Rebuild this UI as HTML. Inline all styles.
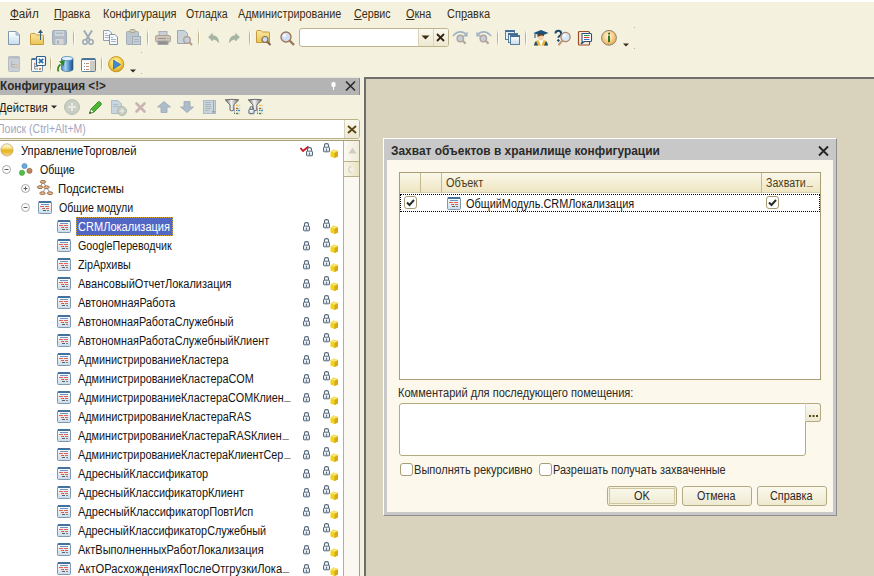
<!DOCTYPE html><html><head><meta charset="utf-8"><style>
*{margin:0;padding:0;box-sizing:border-box}
html,body{width:874px;height:576px;overflow:hidden;background:#F4F1DF}
body{position:relative;font-family:"Liberation Sans",sans-serif;font-size:12px;color:#000}
.ab{position:absolute}
.t{position:absolute;white-space:nowrap;line-height:14px;height:14px;font-size:12px;transform-origin:0 0}
.b{font-weight:bold}
.u{text-decoration:underline}
.el{display:inline-block;width:7px;height:1px;background:#8A8A8A;vertical-align:0px;margin-left:1px}
svg{position:absolute;overflow:visible}
</style></head><body>
<svg width="0" height="0" style="position:absolute;left:0;top:0">
<defs>
<linearGradient id="gDoc" x1="0" y1="0" x2="0" y2="1"><stop offset="0" stop-color="#fff"/><stop offset="1" stop-color="#C9DCEB"/></linearGradient>
<linearGradient id="gFold" x1="0" y1="0" x2="0" y2="1"><stop offset="0" stop-color="#F9E7A0"/><stop offset="1" stop-color="#EBC452"/></linearGradient>
<linearGradient id="gBtn" x1="0" y1="0" x2="0" y2="1"><stop offset="0" stop-color="#FCFBF4"/><stop offset="1" stop-color="#ECE6CC"/></linearGradient>
<linearGradient id="gRoot" x1="0" y1="0" x2="0" y2="1"><stop offset="0" stop-color="#FFF8DC"/><stop offset="0.3" stop-color="#FAEAA0"/><stop offset="0.55" stop-color="#E6B61E"/><stop offset="0.8" stop-color="#EEC24A"/><stop offset="1" stop-color="#FAE8B8"/></linearGradient><radialGradient id="gGold" cx="0.45" cy="0.35" r="0.7"><stop offset="0" stop-color="#FFF6B0"/><stop offset="0.6" stop-color="#F2CD45"/><stop offset="1" stop-color="#C9961C"/></radialGradient>
<radialGradient id="gInfo" cx="0.45" cy="0.4" r="0.65"><stop offset="0" stop-color="#FFF8EA"/><stop offset="0.55" stop-color="#F8CC88"/><stop offset="1" stop-color="#E8A040"/></radialGradient>
<linearGradient id="gCyl" x1="0" y1="0" x2="1" y2="0"><stop offset="0" stop-color="#4A86BC"/><stop offset="0.35" stop-color="#A8D2F2"/><stop offset="0.7" stop-color="#4A88C0"/><stop offset="1" stop-color="#1E4E80"/></linearGradient>
<linearGradient id="gFun" x1="0" y1="0" x2="1" y2="0"><stop offset="0" stop-color="#6A6A6A"/><stop offset="0.45" stop-color="#F4F4F4"/><stop offset="1" stop-color="#707070"/></linearGradient>
<linearGradient id="gLock" x1="0" y1="0" x2="0" y2="1"><stop offset="0" stop-color="#FFFFFF"/><stop offset="1" stop-color="#C4D4E2"/></linearGradient>
<g id="mod">
 <rect x="0.5" y="0.5" width="13" height="12" rx="1" fill="url(#gDoc)" stroke="#8098AE"/>
 <rect x="1" y="0" width="12" height="2" fill="#44729A"/>
 <rect x="3" y="3" width="8" height="1" fill="#6A96C8"/>
 <rect x="2" y="5" width="4" height="1" fill="#E8604C"/><rect x="7" y="5" width="4" height="1" fill="#E8604C"/>
 <rect x="4" y="7" width="2" height="1" fill="#E8604C"/><rect x="6" y="7" width="1" height="1" fill="#707070"/><rect x="8" y="7" width="3" height="1" fill="#E8604C"/>
 <rect x="5" y="9" width="3" height="1" fill="#606060"/><rect x="9" y="9" width="2" height="1" fill="#808080"/>
</g>
<g id="lock">
 <path d="M1.5,4.5 V2.2 Q1.5,0.6 3.2,0.6 H3.8 Q5.5,0.6 5.5,2.2 V4.5" fill="none" stroke="#56687A" stroke-width="1.15"/>
 <rect x="0.5" y="4.2" width="6" height="4.6" rx="0.8" fill="url(#gLock)" stroke="#46586A" stroke-width="0.9"/>
 <rect x="3" y="5.6" width="1" height="2.2" fill="#5E6E7E"/>
</g>
<g id="cube">
 <path d="M0.5,2.5 L3.5,0.5 L8,2 L8,7.5 L4.5,9 L0.5,7.5 Z" fill="#F2D21C"/>
 <path d="M4.5,3.8 L8,2 L8,7.5 L4.5,9 Z" fill="#D8A818"/>
 <path d="M0.5,2.5 L3.5,0.5 L8,2 L4.5,3.8 Z" fill="#F8E470"/>
</g>
<g id="plusc"><circle cx="4.5" cy="4.5" r="4" fill="#fff" stroke="#A8A8A8"/><rect x="2.5" y="4" width="4" height="1" fill="#606060"/><rect x="4" y="2.5" width="1" height="4" fill="#606060"/></g>
<g id="minusc"><circle cx="4.5" cy="4.5" r="4" fill="#fff" stroke="#A8A8A8"/><rect x="2.5" y="4" width="4" height="1" fill="#606060"/></g>
<g id="chk"><rect x="0.5" y="0.5" width="12" height="12" rx="2.5" fill="#fff" stroke="#A59A72"/><path d="M3,6.5 L5.5,9 L10,4" fill="none" stroke="#2A2A2A" stroke-width="2"/></g>
<linearGradient id="gSep" x1="0" y1="0" x2="0" y2="1"><stop offset="0" stop-color="#C9BF98" stop-opacity="0"/><stop offset="0.3" stop-color="#BDB288"/><stop offset="0.7" stop-color="#BDB288"/><stop offset="1" stop-color="#C9BF98" stop-opacity="0"/></linearGradient><g id="sep"><rect x="0" y="0" width="1" height="18" fill="url(#gSep)"/><rect x="1" y="1" width="1" height="16" fill="#FFFFF8" opacity="0.8"/></g>
</defs></svg>
<div class="ab" style="left:0;top:0;width:874px;height:2px;background:#fff"></div>
<div class="t" style="left:10.30px;top:7px;color:#3A2E12;transform:scaleX(0.9724);"><span class="u">Ф</span>айл</div>
<div class="t" style="left:54.40px;top:7px;color:#3A2E12;transform:scaleX(0.8927);"><span class="u">П</span>равка</div>
<div class="t" style="left:103.19px;top:7px;color:#3A2E12;transform:scaleX(0.9127);">Конфигурация</div>
<div class="t" style="left:185.80px;top:7px;color:#3A2E12;transform:scaleX(0.8792);">Отладка</div>
<div class="t" style="left:238.40px;top:7px;color:#3A2E12;transform:scaleX(0.9018);">Администрирование</div>
<div class="t" style="left:353.80px;top:7px;color:#3A2E12;transform:scaleX(0.8927);"><span class="u">С</span>ервис</div>
<div class="t" style="left:405.70px;top:7px;color:#3A2E12;transform:scaleX(0.9036);"><span class="u">О</span>кна</div>
<div class="t" style="left:446.50px;top:7px;color:#3A2E12;transform:scaleX(0.9149);">Сп<span class="u">р</span>авка</div>
<svg style="left:73px;top:29px" width="2" height="18" viewBox="0 0 2 18" ><use href="#sep"/></svg><svg style="left:147px;top:29px" width="2" height="18" viewBox="0 0 2 18" ><use href="#sep"/></svg><svg style="left:198px;top:29px" width="2" height="18" viewBox="0 0 2 18" ><use href="#sep"/></svg><svg style="left:249px;top:29px" width="2" height="18" viewBox="0 0 2 18" ><use href="#sep"/></svg><svg style="left:497px;top:29px" width="2" height="18" viewBox="0 0 2 18" ><use href="#sep"/></svg><svg style="left:525px;top:29px" width="2" height="18" viewBox="0 0 2 18" ><use href="#sep"/></svg><svg style="left:50px;top:55px" width="2" height="18" viewBox="0 0 2 18" ><use href="#sep"/></svg><svg style="left:101px;top:55px" width="2" height="18" viewBox="0 0 2 18" ><use href="#sep"/></svg><svg style="left:8px;top:31px" width="12" height="14" viewBox="0 0 12 14" ><path d="M0.5,0.5 H8 L11.5,4 V13.5 H0.5 Z" fill="url(#gDoc)" stroke="#7E9AB0"/><path d="M8,0.5 L11.5,4 H8 Z" fill="#C4D6E4" stroke="#8EA8BC" stroke-width="0.8"/></svg><svg style="left:30px;top:29px" width="15" height="16" viewBox="0 0 15 16" ><path d="M0.5,15.5 V5.5 Q0.5,4.5 1.5,4.5 H5 L6.5,6 H12.5 Q13.5,6 13.5,7 V15.5 Z" fill="url(#gFold)" stroke="#C59A3A"/><path d="M10.5,11 V2" stroke="#2F5C80" stroke-width="1"/><path d="M8,4 L10.5,0.5 L13,4 Z" fill="#2F5C80"/></svg><svg style="left:52px;top:30px" width="15" height="15" viewBox="0 0 15 15" ><rect x="0.5" y="0.5" width="14" height="14" rx="1" fill="#B2BCC4" stroke="#A0ACB6"/><rect x="3" y="1" width="9" height="5" fill="#CCD6DC"/><rect x="4" y="2.5" width="7" height="1.5" fill="#AEBAC2"/><rect x="3.5" y="9" width="8" height="5.5" fill="#D6D6D4"/><rect x="5" y="10.5" width="2" height="3" fill="#A8B0B6"/></svg><svg style="left:82px;top:30px" width="12" height="15" viewBox="0 0 12 15" ><path d="M2,0.5 L8,10 M10,0.5 L4,10" stroke="#9CAAB6" stroke-width="2" fill="none"/><circle cx="3" cy="12" r="2.2" fill="none" stroke="#9CAAB6" stroke-width="1.6"/><circle cx="9" cy="12" r="2.2" fill="none" stroke="#9CAAB6" stroke-width="1.6"/></svg><svg style="left:103px;top:30px" width="16" height="16" viewBox="0 0 16 16" ><path d="M0.5,0.5 H6 L8.5,3 V10.5 H0.5 Z" fill="#F6F9FC" stroke="#8AA0B4"/><rect x="2" y="3" width="2" height="1" fill="#A8B8C8"/><rect x="2" y="5" width="4" height="1" fill="#A8B8C8"/><rect x="2" y="7" width="4" height="1" fill="#A8B8C8"/><path d="M6.5,4.5 H12 L14.5,7 V14.5 H6.5 Z" fill="#F6F9FC" stroke="#7E96AC"/><rect x="8" y="7" width="2" height="1" fill="#A0B2C4"/><rect x="8" y="9" width="5" height="1" fill="#A0B2C4"/><rect x="8" y="11" width="5" height="1" fill="#A0B2C4"/></svg><svg style="left:126px;top:29px" width="15" height="16" viewBox="0 0 15 16" ><rect x="0.5" y="2.5" width="12" height="13" rx="1" fill="#BCC6CE" stroke="#A0ACB6"/><rect x="4" y="0.5" width="5" height="3" rx="1" fill="#D4CCB0" stroke="#B0A888"/><rect x="6.5" y="7.5" width="8" height="8" fill="#C4CED6" stroke="#A0ACB6"/><rect x="8" y="10" width="5" height="1" fill="#A8B4BE"/><rect x="8" y="12" width="5" height="1" fill="#A8B4BE"/></svg><svg style="left:155px;top:31px" width="16" height="14" viewBox="0 0 16 14" ><rect x="4" y="0.5" width="8" height="5" fill="#C8D0D6" stroke="#A8B0B6"/><rect x="0.5" y="4.5" width="15" height="6.5" rx="1.5" fill="#CEC4BA" stroke="#ACA39A"/><rect x="3" y="7" width="8" height="1" fill="#9A9088"/><rect x="12" y="7" width="1.5" height="1" fill="#8CC08C"/><rect x="3" y="10" width="10" height="3.5" fill="#8E8E8E" stroke="#A8A8A8"/></svg><svg style="left:177px;top:30px" width="16" height="16" viewBox="0 0 16 16" ><path d="M0.5,0.5 H7.5 L10.5,3.5 V13.5 H0.5 Z" fill="#C9D3DA" stroke="#9CAAB4"/><circle cx="10" cy="10" r="3.3" fill="#C4D0E0" stroke="#B49C8C" stroke-width="1.3"/><path d="M12.3,12.3 L15,15" stroke="#B49C8C" stroke-width="2"/></svg><svg style="left:208px;top:33px" width="11" height="10" viewBox="0 0 11 10" ><path d="M0.5,4 L4.5,0.5 V2.8 Q10.5,2.5 10.5,9.5 Q8.5,6 4.5,6 V8 Z" fill="#A7B5A5" stroke="#9AA898" stroke-width="0.6"/></svg><svg style="left:229px;top:33px" width="11" height="10" viewBox="0 0 11 10" ><path d="M10.5,4 L6.5,0.5 V2.8 Q0.5,2.5 0.5,9.5 Q2.5,6 6.5,6 V8 Z" fill="#A7B5A5" stroke="#9AA898" stroke-width="0.6"/></svg><svg style="left:256px;top:30px" width="16" height="16" viewBox="0 0 16 16" ><path d="M0.5,12.5 V1.5 Q0.5,0.5 1.5,0.5 H5 L6.5,2 H12.5 Q13.5,2 13.5,3 V12.5 Z" fill="url(#gFold)" stroke="#C59A3A"/><circle cx="9" cy="9.5" r="3" fill="#C8DCF2" stroke="#8A6A50" stroke-width="1.2"/><path d="M11,11.5 L14.5,15" stroke="#8A5E40" stroke-width="2"/></svg><svg style="left:280px;top:31px" width="16" height="16" viewBox="0 0 16 16" ><circle cx="6" cy="6" r="5" fill="#CFE0F6" stroke="#A07656" stroke-width="1.4"/><circle cx="4.5" cy="4.5" r="1.8" fill="#F0F6FF"/><path d="M9.5,9.5 L14,14" stroke="#A07656" stroke-width="2.4"/></svg><div class="ab" style="left:299px;top:28px;width:150px;height:19px;background:#fff;border:1px solid #BDB38C;border-radius:3px"></div><div class="ab" style="left:418px;top:29px;width:15px;height:17px;background:linear-gradient(#FBF9F0,#EEE8D0);border-left:1px solid #DCD4B8"></div><div class="ab" style="left:433px;top:29px;width:15px;height:17px;background:linear-gradient(#FBF9F0,#EEE8D0);border-left:1px solid #DCD4B8;border-radius:0 2px 2px 0"></div><svg style="left:421px;top:35px" width="9" height="5" viewBox="0 0 9 5" ><path d="M0.5,0.5 H8.5 L4.5,4.5 Z" fill="#3A2E12"/></svg><svg style="left:436px;top:33px" width="9" height="9" viewBox="0 0 9 9" ><path d="M1,1 L8,8 M8,1 L1,8" stroke="#2E2410" stroke-width="1.8"/></svg><svg style="left:452px;top:30px" width="17" height="16" viewBox="0 0 17 16" ><g transform="translate(0,-2)"><path d="M1,8 Q7,1 14,6" fill="none" stroke="#A0B4C4" stroke-width="1.8"/><path d="M10.8,8.5 H15.6 V3.6 Z" fill="#A0B4C4"/></g><circle cx="8.3" cy="8.5" r="3.2" fill="#C2D0DC" stroke="#B4A49C" stroke-width="1.4"/><path d="M10.6,10.8 L13.6,13.6" stroke="#B4A49C" stroke-width="2.2"/></svg><svg style="left:475px;top:30px" width="17" height="16" viewBox="0 0 17 16" ><g transform="translate(0,-2)"><path d="M16,8 Q10,1 3,6" fill="none" stroke="#A0B4C4" stroke-width="1.8"/><path d="M6.2,8.5 H1.4 V3.6 Z" fill="#A0B4C4"/></g><circle cx="8.3" cy="8.5" r="3.2" fill="#C2D0DC" stroke="#B4A49C" stroke-width="1.4"/><path d="M10.6,10.8 L13.6,13.6" stroke="#B4A49C" stroke-width="2.2"/></svg><svg style="left:505px;top:30px" width="15" height="15" viewBox="0 0 15 15" ><rect x="0.5" y="0.5" width="9" height="9" fill="#E4EEF6" stroke="#5A7E9E"/><rect x="0.5" y="0.5" width="9" height="1.5" fill="#3E6A92"/><rect x="3.5" y="3.5" width="9" height="9" fill="#E8F0F8" stroke="#5A7E9E"/><rect x="3.5" y="3.5" width="9" height="1.5" fill="#3E6A92"/><rect x="5.5" y="5.5" width="9" height="9" fill="url(#gDoc)" stroke="#5A7E9E"/><rect x="5.5" y="5.5" width="9" height="1.5" fill="#3E6A92"/></svg><svg style="left:533px;top:29px" width="16" height="17" viewBox="0 0 16 17" ><path d="M0.5,4 L8,1 L15.5,4 L8,7 Z" fill="#1E4F78"/><path d="M2,4.5 V9" stroke="#1E4F78" stroke-width="1"/><path d="M4.5,6 Q4.5,11 8,11.5 Q11,11 11,6 Z" fill="#F2D0AE"/><path d="M4.5,6 Q6,4 11,6 V7 Q8,5.5 4.5,8 Z" fill="#6A4020"/><path d="M1,16.5 Q2,11.5 5.5,11 L8,16.5 Z" fill="#E8B830"/><path d="M15,16.5 Q14,11.5 10.5,11 L8,16.5 Z" fill="#E8B830"/><path d="M5.5,11 L8,16.5 L10.5,11 Q8,12.5 5.5,11Z" fill="#fff"/><path d="M1,16.5 Q1.5,13 3,12 L5,16.5 Z" fill="#1E4F78"/><path d="M15,16.5 Q14.5,13 13,12 L11,16.5 Z" fill="#1E4F78"/></svg><svg style="left:554px;top:30px" width="17" height="16" viewBox="0 0 17 16" ><path d="M1.5,3.5 Q1.5,0.8 4.3,0.8 Q7.2,0.8 7.2,3.4 Q7.2,5 5.4,6 Q4.4,6.6 4.4,7.8" fill="none" stroke="#1F4A70" stroke-width="2"/><rect x="3.2" y="9.3" width="2.3" height="2.3" fill="#1F4A70" transform="rotate(45 4.35 10.45)"/><circle cx="11.5" cy="7" r="4.6" fill="#D8E8F8" stroke="#B08462" stroke-width="1.3"/><circle cx="10.3" cy="5.6" r="1.8" fill="#F4F8FF"/><path d="M8.3,10.6 L5,14.5" stroke="#C09A78" stroke-width="2.2" stroke-linecap="round"/></svg><svg style="left:577px;top:30px" width="15" height="16" viewBox="0 0 15 16" ><rect x="1.5" y="1.5" width="11" height="13.5" rx="1" fill="#FCE9DA" stroke="#9A4E2A" stroke-width="1.2"/><path d="M5,3.5 H13.5 Q14.5,3.5 14.5,4.5 V10.5 Q14.5,11.5 13.5,11.5 H7.5 L4,14 L5.5,11.5 Q5,11.5 5,10.5 Z" fill="#fff" stroke="#24507A" stroke-width="1.1"/><rect x="7" y="5" width="5.5" height="1" fill="#2E9A3A"/><rect x="7" y="7" width="5.5" height="1" fill="#E03A2C"/><rect x="7" y="9" width="5.5" height="1" fill="#3A6CC8"/></svg><svg style="left:601px;top:30px" width="17" height="17" viewBox="0 0 17 17" ><circle cx="8" cy="7.8" r="7.4" fill="url(#gInfo)" stroke="#8E8474" stroke-width="1"/><path d="M7,3.2 L9,2.2 V4.4 H7 Z" fill="#2F7A1E"/><rect x="7" y="5.6" width="2" height="6.6" fill="#2F7A1E"/></svg><svg style="left:623px;top:43px" width="6" height="4" viewBox="0 0 6 4" ><path d="M0,0.5 H6 L3,3.5 Z" fill="#3A2A10"/></svg><div class="ab" style="left:634px;top:27px;width:1px;height:1px;background:#BBB49A"></div><div class="ab" style="left:634px;top:48px;width:1px;height:1px;background:#BBB49A"></div><svg style="left:8px;top:56px" width="12" height="16" viewBox="0 0 12 16" ><rect x="0.5" y="0.5" width="11" height="15" rx="1" fill="#C9CFD5" stroke="#B6BEC6"/><rect x="0.5" y="0.5" width="11" height="2" fill="#B4BCC4"/><rect x="3" y="5" width="1.5" height="1.5" fill="#D8B8A0"/><path d="M3.7,6.5 V11 H7 M3.7,8.5 H7" stroke="#B8B0A8" fill="none"/><rect x="7.5" y="8" width="2" height="1.5" fill="#D8B8A0"/><rect x="7.5" y="10.5" width="2" height="1.5" fill="#D8B8A0"/></svg><svg style="left:31px;top:56px" width="15" height="16" viewBox="0 0 15 16" ><rect x="0.5" y="2.5" width="11" height="13" rx="1" fill="#F4F8FC" stroke="#6A8AA6"/><rect x="0.5" y="2.5" width="4" height="1.5" fill="#3E6A92"/><rect x="3" y="7" width="1.5" height="1.5" fill="#D88850"/><path d="M3.7,8.5 V13 H7 M3.7,10.5 H7" stroke="#8A8A8A" fill="none"/><rect x="8" y="12" width="2" height="2" fill="#D88850"/><rect x="5.5" y="0.5" width="9" height="9" rx="1" fill="#fff" stroke="#2E5E88" stroke-width="1.2"/><path d="M7.8,2.8 L12.2,7.2 M12.2,2.8 L7.8,7.2" stroke="#2E6AA0" stroke-width="1.8"/></svg><svg style="left:56px;top:56px" width="18" height="17" viewBox="0 0 18 17" ><path d="M5.5,2.5 V13.2 A5.75,2.3 0 0 0 17,13.2 V2.5 Z" fill="url(#gCyl)" stroke="#2A5A88" stroke-width="0.6"/><ellipse cx="11.25" cy="2.6" rx="5.75" ry="2.1" fill="#E2F2FC" stroke="#4A84B8" stroke-width="0.8"/><path d="M2.5,15.5 Q0.8,11.5 4.5,8.5" fill="none" stroke="#3A8A2A" stroke-width="1.7"/><path d="M3,5.2 L8.8,4.6 L7.6,10.2 Z" fill="#2E8A22"/></svg><svg style="left:81px;top:58px" width="15" height="14" viewBox="0 0 15 14" ><rect x="0.5" y="0.5" width="14" height="13" rx="1" fill="#fff" stroke="#5E7E9A"/><rect x="1" y="0.5" width="13" height="1.6" fill="#44709A"/><rect x="9" y="3" width="5" height="10" fill="#CDCCC4"/><rect x="3" y="5" width="1" height="1" fill="#7A90A8"/><rect x="5" y="5" width="3" height="1" fill="#C89070"/><rect x="3" y="8" width="1" height="1" fill="#7A90A8"/><rect x="5" y="8" width="3" height="1" fill="#C89070"/><rect x="3" y="11" width="1" height="1" fill="#7A90A8"/><rect x="5" y="11" width="3" height="1" fill="#C89070"/></svg><svg style="left:108px;top:56px" width="17" height="17" viewBox="0 0 17 17" ><circle cx="8.2" cy="8.2" r="7.6" fill="url(#gGold)" stroke="#C8961E"/><path d="M5.5,4 L12.5,8.5 L5.5,13 Z" fill="#3C8AD8" stroke="#2A5A9A" stroke-width="0.6"/></svg><svg style="left:130px;top:69px" width="6" height="4" viewBox="0 0 6 4" ><path d="M0,0.5 H6 L3,3.5 Z" fill="#2A2A2A"/></svg><div class="ab" style="left:141px;top:52px;width:1px;height:1px;background:#BBB49A"></div><div class="ab" style="left:141px;top:73px;width:1px;height:1px;background:#BBB49A"></div>
<div class="ab" style="left:0;top:77px;width:874px;height:2px;background:#6E6E6E"></div>
<div class="ab" style="left:364px;top:77px;width:510px;height:499px;background:#D9D3BD;border-left:2px solid #6E6E6E;border-top:2px solid #6E6E6E"></div>
<div class="ab" style="left:0;top:77px;width:364px;height:499px;background:#F4F1DF"></div>
<div class="ab" style="left:0;top:77px;width:360px;height:1px;background:#E8E6DA"></div>
<div class="ab" style="left:0;top:78px;width:360px;height:17px;background:#B4B4B4;border-right:1px solid #8A8A8A"></div>
<div class="t b" style="left:-0.50px;top:79px;color:#2A2A2A;transform:scaleX(0.9769);">Конфигурация &lt;!&gt;</div>
<svg style="left:331px;top:82px" width="5" height="8" viewBox="0 0 5 8" ><rect x="0.5" y="0" width="4" height="5" rx="1.5" fill="#fff"/><rect x="2" y="5" width="1" height="3" fill="#fff"/></svg>
<svg style="left:345px;top:81px" width="11" height="10" viewBox="0 0 11 10" ><path d="M1,0.5 L10,9.5 M10,0.5 L1,9.5" stroke="#2A2A2A" stroke-width="1.6"/></svg>
<div class="t" style="left:-1.00px;top:101px;color:#1A1A1A;transform:scaleX(0.9288);">Действия</div>
<svg style="left:51px;top:105px" width="6" height="4" viewBox="0 0 6 4" ><path d="M0,0.5 H6 L3,3.5 Z" fill="#2A2A2A"/></svg>
<svg style="left:64px;top:99px" width="16" height="16" viewBox="0 0 16 16" ><circle cx="8" cy="8" r="7.5" fill="#C9CEC2" stroke="#B9BFB2"/><rect x="4" y="7" width="8" height="2" fill="#E6E8E2"/><rect x="7" y="4" width="2" height="8" fill="#E6E8E2"/></svg>
<svg style="left:89px;top:101px" width="13" height="13" viewBox="0 0 13 13" ><path d="M0.5,12.5 L2,8 L9,1 Q10,0.3 11,1 L12,2 Q12.7,3 12,4 L5,11 Z" fill="#4CB830" stroke="#2E7A1E" stroke-width="0.8"/><path d="M0.5,12.5 L2,8 L5,11 Z" fill="#fff" stroke="#2E7A1E" stroke-width="0.6"/><path d="M0.5,12.5 L1.2,10.5 L2.5,11.8 Z" fill="#1E4A14"/></svg>
<svg style="left:111px;top:100px" width="16" height="16" viewBox="0 0 16 16" ><path d="M0.5,0.5 H7 L10.5,4 V13.5 H0.5 Z" fill="#C8D4DE" stroke="#AEBCC8"/><rect x="2" y="4" width="5" height="1" fill="#B0BCC8"/><rect x="2" y="6" width="6" height="1" fill="#B0BCC8"/><circle cx="11" cy="11" r="4.5" fill="#C4CCC0" stroke="#B2BAAE"/><rect x="8.5" y="10.3" width="5" height="1.5" fill="#E4E8E0"/><rect x="10.3" y="8.5" width="1.5" height="5" fill="#E4E8E0"/></svg>
<svg style="left:135px;top:102px" width="11" height="11" viewBox="0 0 11 11" ><path d="M1.5,1.5 L9.5,9.5 M9.5,1.5 L1.5,9.5" stroke="#C9B4B2" stroke-width="2.6" stroke-linecap="round"/></svg>
<svg style="left:157px;top:101px" width="14" height="12" viewBox="0 0 14 12" ><path d="M0.5,6 L7,0.5 L13.5,6 H10 V11.5 H4 V6 Z" fill="#AEBCCA" stroke="#98A8B8" stroke-width="0.8"/></svg>
<svg style="left:180px;top:101px" width="14" height="12" viewBox="0 0 14 12" ><path d="M0.5,6 L7,11.5 L13.5,6 H10 V0.5 H4 V6 Z" fill="#AEBCCA" stroke="#98A8B8" stroke-width="0.8"/></svg>
<svg style="left:203px;top:100px" width="14" height="15" viewBox="0 0 14 15" ><rect x="0.5" y="0.5" width="12" height="13" fill="#CBD5DC" stroke="#AEBAC4"/><rect x="2" y="2" width="6" height="1" fill="#A8B4C0"/><rect x="2" y="4" width="6" height="1" fill="#A8B4C0"/><rect x="2" y="6" width="6" height="1" fill="#A8B4C0"/><rect x="2" y="8" width="6" height="1" fill="#A8B4C0"/><rect x="2" y="10" width="4" height="1" fill="#A8B4C0"/><path d="M10.5,1 V12" stroke="#98A6B2"/><path d="M8.5,11 H12.5 L10.5,14 Z" fill="#98A6B2"/></svg>
<svg style="left:225px;top:99px" width="16" height="16" viewBox="0 0 16 16" ><path d="M0.3,0.8 Q7,-0.2 13.7,0.8 L8.8,6 V11.2 Q6.8,12.6 5,11.2 V6 Z" fill="url(#gFun)" stroke="#5E5E5E" stroke-width="0.9"/><path d="M9.5,8.5 V14.5" stroke="#A0A0A0" stroke-width="0.8"/><rect x="11" y="5.7" width="2.3" height="1.4" fill="#EEC43A"/><rect x="13.5" y="5.7" width="1.6" height="1.4" fill="#D0D0D0"/><rect x="11" y="8.8" width="2.3" height="1.4" fill="#B8642A"/><rect x="13.5" y="8.8" width="1.6" height="1.4" fill="#D0D0D0"/><rect x="11" y="11" width="1" height="1" fill="#707070"/><rect x="12.5" y="10.8" width="2.6" height="1.4" fill="#2AA0E0"/><rect x="9" y="14" width="1" height="1" fill="#707070"/><rect x="11" y="13.8" width="2.3" height="1.4" fill="#3A8A2A"/><rect x="13.5" y="13.8" width="1.6" height="1.4" fill="#D0D0D0"/></svg>
<svg style="left:248px;top:99px" width="16" height="16" viewBox="0 0 16 16" ><path d="M0.3,0.8 Q7,-0.2 13.7,0.8 L8.8,6 V11.2 Q6.8,12.6 5,11.2 V6 Z" fill="url(#gFun)" stroke="#5E5E5E" stroke-width="0.9"/><path d="M9.5,8.5 V14.5" stroke="#A0A0A0" stroke-width="0.8"/><rect x="11" y="5.7" width="2.3" height="1.4" fill="#EEC43A"/><rect x="13.5" y="5.7" width="1.6" height="1.4" fill="#D0D0D0"/><rect x="11" y="8.8" width="2.3" height="1.4" fill="#B8642A"/><rect x="13.5" y="8.8" width="1.6" height="1.4" fill="#D0D0D0"/><rect x="11" y="11" width="1" height="1" fill="#707070"/><rect x="12.5" y="10.8" width="2.6" height="1.4" fill="#2AA0E0"/><rect x="9" y="14" width="1" height="1" fill="#707070"/><rect x="11" y="13.8" width="2.3" height="1.4" fill="#3A8A2A"/><rect x="13.5" y="13.8" width="1.6" height="1.4" fill="#D0D0D0"/><path d="M2,10.5 V8.9 Q2,7.6 3.5,7.6 Q5,7.6 5,8.9 V10.5" fill="none" stroke="#50647A" stroke-width="1"/><rect x="0.9" y="10.3" width="5.2" height="4.4" rx="0.7" fill="url(#gLock)" stroke="#46586A" stroke-width="0.9"/></svg>
<div class="ab" style="left:-4px;top:119px;width:364px;height:20px;background:#fff;border:1px solid #B9AF88;border-radius:3px"></div>
<div class="t" style="left:-3.38px;top:122px;color:#A6A6BE;transform:scaleX(0.8770);">Поиск (Ctrl+Alt+M)</div>
<div class="ab" style="left:344px;top:120px;width:15px;height:18px;background:linear-gradient(#FBF9F0,#EDE8D2);border-left:1px solid #D8D2B8;border-radius:0 2px 2px 0"></div>
<svg style="left:347px;top:125px" width="10" height="9" viewBox="0 0 10 9" ><path d="M1,1 L9,8 M9,1 L1,8" stroke="#5A4510" stroke-width="1.8"/></svg>
<div class="ab" style="left:0;top:140px;width:360px;height:436px;background:#fff;border-top:1px solid #A89E76;border-right:1px solid #A89E76"></div>
<div class="ab" style="left:343px;top:141px;width:16px;height:435px;background:#FAF8F0;border-left:1px solid #B9AF88"></div>
<div class="ab" style="left:344px;top:141px;width:15px;height:21px;background:linear-gradient(90deg,#FBFAF3,#F1ECD8);border-bottom:1px solid #B9AF88"></div>
<svg style="left:348px;top:147px" width="8" height="7" viewBox="0 0 8 7" ><path d="M0.5,6.5 L4.5,0.5 L8.5,6.5 Z" fill="#CFCDC2"/></svg>
<div class="ab" style="left:344px;top:162px;width:15px;height:15px;background:linear-gradient(90deg,#F8F5E6,#E9E2C2);border-bottom:1px solid #B9AF88"></div>
<svg style="left:348px;top:166px" width="7" height="7" viewBox="0 0 7 7" ><circle cx="3.5" cy="3.5" r="2.8" fill="#F2F0E6"/><path d="M3.5,0.7 A2.8,2.8 0 0 0 3.5,6.3" fill="none" stroke="#D6D2C0" stroke-width="1.2"/></svg>
<svg style="left:0px;top:144px" width="14" height="13" viewBox="0 0 14 13" ><circle cx="7" cy="5.9" r="6.1" fill="url(#gRoot)" stroke="#C8AE76" stroke-width="0.9"/></svg>
<div class="t" style="left:21.00px;top:144px;color:#141414;transform:scaleX(0.9341);">УправлениеТорговлей</div>
<svg style="left:300px;top:146px" width="9" height="7" viewBox="0 0 9 7" ><path d="M0.5,2 L3,5 L8.5,0.5" fill="none" stroke="#C8141C" stroke-width="1.8"/></svg>
<svg style="left:306px;top:147px" width="8" height="10" viewBox="0 0 8 10" ><use href="#lock"/></svg>
<svg style="left:323px;top:143px" width="8" height="10" viewBox="0 0 8 10" ><use href="#lock"/></svg>
<svg style="left:330px;top:149px" width="9" height="10" viewBox="0 0 9 10" ><use href="#cube"/></svg>
<svg style="left:2px;top:165px" width="9" height="9" viewBox="0 0 9 9" ><use href="#minusc"/></svg>
<svg style="left:19px;top:163px" width="14" height="14" viewBox="0 0 14 14" ><circle cx="5.5" cy="3" r="2.6" fill="#6AA8E0" stroke="#4A88C0" stroke-width="0.6"/><circle cx="3" cy="9.8" r="2.6" fill="#50C040" stroke="#3A9A2A" stroke-width="0.6"/><circle cx="10.5" cy="7.8" r="2.6" fill="#B88A62" stroke="#8A6040" stroke-width="0.6"/></svg>
<div class="t" style="left:40.00px;top:163px;color:#141414;transform:scaleX(0.8795);">Общие</div>
<svg style="left:21px;top:184px" width="9" height="9" viewBox="0 0 9 9" ><use href="#plusc"/></svg>
<svg style="left:37px;top:180px" width="17" height="16" viewBox="0 0 17 16" ><path d="M6,2.5 L3,6.5 M6,2.5 L9.5,6.5 M9.5,7.5 L5.5,12.5 M9.5,7.5 L13,12.5" stroke="#6A8AA8" stroke-width="0.9"/><ellipse cx="6" cy="1.8" rx="2.8" ry="1.4" fill="#E2B890" stroke="#9A6A42" stroke-width="0.9"/><ellipse cx="3" cy="7.2" rx="2.8" ry="1.4" fill="#E2B890" stroke="#9A6A42" stroke-width="0.9"/><ellipse cx="9.5" cy="7.2" rx="2.8" ry="1.4" fill="#E2B890" stroke="#9A6A42" stroke-width="0.9"/><ellipse cx="5.5" cy="13.2" rx="2.8" ry="1.4" fill="#E2B890" stroke="#9A6A42" stroke-width="0.9"/><ellipse cx="13" cy="13.2" rx="2.8" ry="1.4" fill="#E2B890" stroke="#9A6A42" stroke-width="0.9"/></svg>
<div class="t" style="left:58.05px;top:182px;color:#141414;transform:scaleX(0.9471);">Подсистемы</div>
<svg style="left:21px;top:203px" width="9" height="9" viewBox="0 0 9 9" ><use href="#minusc"/></svg>
<svg style="left:38px;top:201px" width="14" height="13" viewBox="0 0 14 13" ><use href="#mod"/></svg>
<div class="t" style="left:59.00px;top:201px;color:#141414;transform:scaleX(0.8845);">Общие модули</div>
<svg style="left:57px;top:220px" width="14" height="13" viewBox="0 0 14 13" ><use href="#mod"/></svg>
<svg style="left:303px;top:222px" width="8" height="10" viewBox="0 0 8 10" ><use href="#lock"/></svg>
<svg style="left:323px;top:219px" width="8" height="10" viewBox="0 0 8 10" ><use href="#lock"/></svg>
<svg style="left:330px;top:225px" width="9" height="10" viewBox="0 0 9 10" ><use href="#cube"/></svg>
<div class="ab" style="left:76px;top:217px;width:97px;height:19px;background:#5266C4;border:1px dotted #D8A830"></div>
<div class="t" style="left:77.80px;top:220px;color:#fff;transform:scaleX(0.9200);">CRMЛокализация</div>
<svg style="left:57px;top:239px" width="14" height="13" viewBox="0 0 14 13" ><use href="#mod"/></svg>
<svg style="left:303px;top:241px" width="8" height="10" viewBox="0 0 8 10" ><use href="#lock"/></svg>
<svg style="left:323px;top:238px" width="8" height="10" viewBox="0 0 8 10" ><use href="#lock"/></svg>
<svg style="left:330px;top:244px" width="9" height="10" viewBox="0 0 9 10" ><use href="#cube"/></svg>
<div class="t" style="left:78.00px;top:239px;color:#141414;transform:scaleX(0.8914);">GoogleПереводчик</div>
<svg style="left:57px;top:258px" width="14" height="13" viewBox="0 0 14 13" ><use href="#mod"/></svg>
<svg style="left:303px;top:260px" width="8" height="10" viewBox="0 0 8 10" ><use href="#lock"/></svg>
<svg style="left:323px;top:257px" width="8" height="10" viewBox="0 0 8 10" ><use href="#lock"/></svg>
<svg style="left:330px;top:263px" width="9" height="10" viewBox="0 0 9 10" ><use href="#cube"/></svg>
<div class="t" style="left:78.00px;top:258px;color:#141414;transform:scaleX(0.8966);">ZipАрхивы</div>
<svg style="left:57px;top:277px" width="14" height="13" viewBox="0 0 14 13" ><use href="#mod"/></svg>
<svg style="left:303px;top:279px" width="8" height="10" viewBox="0 0 8 10" ><use href="#lock"/></svg>
<svg style="left:323px;top:276px" width="8" height="10" viewBox="0 0 8 10" ><use href="#lock"/></svg>
<svg style="left:330px;top:282px" width="9" height="10" viewBox="0 0 9 10" ><use href="#cube"/></svg>
<div class="t" style="left:78.00px;top:277px;color:#141414;transform:scaleX(0.9162);">АвансовыйОтчетЛокализация</div>
<svg style="left:57px;top:296px" width="14" height="13" viewBox="0 0 14 13" ><use href="#mod"/></svg>
<svg style="left:303px;top:298px" width="8" height="10" viewBox="0 0 8 10" ><use href="#lock"/></svg>
<svg style="left:323px;top:295px" width="8" height="10" viewBox="0 0 8 10" ><use href="#lock"/></svg>
<svg style="left:330px;top:301px" width="9" height="10" viewBox="0 0 9 10" ><use href="#cube"/></svg>
<div class="t" style="left:78.00px;top:296px;color:#141414;transform:scaleX(0.9093);">АвтономнаяРабота</div>
<svg style="left:57px;top:315px" width="14" height="13" viewBox="0 0 14 13" ><use href="#mod"/></svg>
<svg style="left:303px;top:317px" width="8" height="10" viewBox="0 0 8 10" ><use href="#lock"/></svg>
<svg style="left:323px;top:314px" width="8" height="10" viewBox="0 0 8 10" ><use href="#lock"/></svg>
<svg style="left:330px;top:320px" width="9" height="10" viewBox="0 0 9 10" ><use href="#cube"/></svg>
<div class="t" style="left:78.00px;top:315px;color:#141414;transform:scaleX(0.9029);">АвтономнаяРаботаСлужебный</div>
<svg style="left:57px;top:334px" width="14" height="13" viewBox="0 0 14 13" ><use href="#mod"/></svg>
<svg style="left:303px;top:336px" width="8" height="10" viewBox="0 0 8 10" ><use href="#lock"/></svg>
<svg style="left:323px;top:333px" width="8" height="10" viewBox="0 0 8 10" ><use href="#lock"/></svg>
<svg style="left:330px;top:339px" width="9" height="10" viewBox="0 0 9 10" ><use href="#cube"/></svg>
<div class="t" style="left:78.00px;top:334px;color:#141414;transform:scaleX(0.9024);">АвтономнаяРаботаСлужебныйКлиент</div>
<svg style="left:57px;top:353px" width="14" height="13" viewBox="0 0 14 13" ><use href="#mod"/></svg>
<svg style="left:303px;top:355px" width="8" height="10" viewBox="0 0 8 10" ><use href="#lock"/></svg>
<svg style="left:323px;top:352px" width="8" height="10" viewBox="0 0 8 10" ><use href="#lock"/></svg>
<svg style="left:330px;top:358px" width="9" height="10" viewBox="0 0 9 10" ><use href="#cube"/></svg>
<div class="t" style="left:78.00px;top:353px;color:#141414;transform:scaleX(0.9036);">АдминистрированиеКластера</div>
<svg style="left:57px;top:372px" width="14" height="13" viewBox="0 0 14 13" ><use href="#mod"/></svg>
<svg style="left:303px;top:374px" width="8" height="10" viewBox="0 0 8 10" ><use href="#lock"/></svg>
<svg style="left:323px;top:371px" width="8" height="10" viewBox="0 0 8 10" ><use href="#lock"/></svg>
<svg style="left:330px;top:377px" width="9" height="10" viewBox="0 0 9 10" ><use href="#cube"/></svg>
<div class="t" style="left:78.00px;top:372px;color:#141414;transform:scaleX(0.9041);">АдминистрированиеКластераCOM</div>
<svg style="left:57px;top:391px" width="14" height="13" viewBox="0 0 14 13" ><use href="#mod"/></svg>
<svg style="left:303px;top:393px" width="8" height="10" viewBox="0 0 8 10" ><use href="#lock"/></svg>
<svg style="left:323px;top:390px" width="8" height="10" viewBox="0 0 8 10" ><use href="#lock"/></svg>
<svg style="left:330px;top:396px" width="9" height="10" viewBox="0 0 9 10" ><use href="#cube"/></svg>
<div class="t" style="left:78.00px;top:391px;color:#141414;transform:scaleX(0.9008);">АдминистрированиеКластераCOMКлиен<span class=el></span></div>
<svg style="left:57px;top:410px" width="14" height="13" viewBox="0 0 14 13" ><use href="#mod"/></svg>
<svg style="left:303px;top:412px" width="8" height="10" viewBox="0 0 8 10" ><use href="#lock"/></svg>
<svg style="left:323px;top:409px" width="8" height="10" viewBox="0 0 8 10" ><use href="#lock"/></svg>
<svg style="left:330px;top:415px" width="9" height="10" viewBox="0 0 9 10" ><use href="#cube"/></svg>
<div class="t" style="left:78.00px;top:410px;color:#141414;transform:scaleX(0.9058);">АдминистрированиеКластераRAS</div>
<svg style="left:57px;top:429px" width="14" height="13" viewBox="0 0 14 13" ><use href="#mod"/></svg>
<svg style="left:303px;top:431px" width="8" height="10" viewBox="0 0 8 10" ><use href="#lock"/></svg>
<svg style="left:323px;top:428px" width="8" height="10" viewBox="0 0 8 10" ><use href="#lock"/></svg>
<svg style="left:330px;top:434px" width="9" height="10" viewBox="0 0 9 10" ><use href="#cube"/></svg>
<div class="t" style="left:78.00px;top:429px;color:#141414;transform:scaleX(0.9047);">АдминистрированиеКластераRASКлиен<span class=el></span></div>
<svg style="left:57px;top:448px" width="14" height="13" viewBox="0 0 14 13" ><use href="#mod"/></svg>
<svg style="left:303px;top:450px" width="8" height="10" viewBox="0 0 8 10" ><use href="#lock"/></svg>
<svg style="left:323px;top:447px" width="8" height="10" viewBox="0 0 8 10" ><use href="#lock"/></svg>
<svg style="left:330px;top:453px" width="9" height="10" viewBox="0 0 9 10" ><use href="#cube"/></svg>
<div class="t" style="left:78.00px;top:448px;color:#141414;transform:scaleX(0.9008);">АдминистрированиеКластераКлиентСер<span class=el></span></div>
<svg style="left:57px;top:467px" width="14" height="13" viewBox="0 0 14 13" ><use href="#mod"/></svg>
<svg style="left:303px;top:469px" width="8" height="10" viewBox="0 0 8 10" ><use href="#lock"/></svg>
<svg style="left:323px;top:466px" width="8" height="10" viewBox="0 0 8 10" ><use href="#lock"/></svg>
<svg style="left:330px;top:472px" width="9" height="10" viewBox="0 0 9 10" ><use href="#cube"/></svg>
<div class="t" style="left:78.00px;top:467px;color:#141414;transform:scaleX(0.9112);">АдресныйКлассификатор</div>
<svg style="left:57px;top:486px" width="14" height="13" viewBox="0 0 14 13" ><use href="#mod"/></svg>
<svg style="left:303px;top:488px" width="8" height="10" viewBox="0 0 8 10" ><use href="#lock"/></svg>
<svg style="left:323px;top:485px" width="8" height="10" viewBox="0 0 8 10" ><use href="#lock"/></svg>
<svg style="left:330px;top:491px" width="9" height="10" viewBox="0 0 9 10" ><use href="#cube"/></svg>
<div class="t" style="left:78.00px;top:486px;color:#141414;transform:scaleX(0.9098);">АдресныйКлассификаторКлиент</div>
<svg style="left:57px;top:505px" width="14" height="13" viewBox="0 0 14 13" ><use href="#mod"/></svg>
<svg style="left:303px;top:507px" width="8" height="10" viewBox="0 0 8 10" ><use href="#lock"/></svg>
<svg style="left:323px;top:504px" width="8" height="10" viewBox="0 0 8 10" ><use href="#lock"/></svg>
<svg style="left:330px;top:510px" width="9" height="10" viewBox="0 0 9 10" ><use href="#cube"/></svg>
<div class="t" style="left:78.00px;top:505px;color:#141414;transform:scaleX(0.9183);">АдресныйКлассификаторПовтИсп</div>
<svg style="left:57px;top:524px" width="14" height="13" viewBox="0 0 14 13" ><use href="#mod"/></svg>
<svg style="left:303px;top:526px" width="8" height="10" viewBox="0 0 8 10" ><use href="#lock"/></svg>
<svg style="left:323px;top:523px" width="8" height="10" viewBox="0 0 8 10" ><use href="#lock"/></svg>
<svg style="left:330px;top:529px" width="9" height="10" viewBox="0 0 9 10" ><use href="#cube"/></svg>
<div class="t" style="left:78.00px;top:524px;color:#141414;transform:scaleX(0.9038);">АдресныйКлассификаторСлужебный</div>
<svg style="left:57px;top:543px" width="14" height="13" viewBox="0 0 14 13" ><use href="#mod"/></svg>
<svg style="left:303px;top:545px" width="8" height="10" viewBox="0 0 8 10" ><use href="#lock"/></svg>
<svg style="left:323px;top:542px" width="8" height="10" viewBox="0 0 8 10" ><use href="#lock"/></svg>
<svg style="left:330px;top:548px" width="9" height="10" viewBox="0 0 9 10" ><use href="#cube"/></svg>
<div class="t" style="left:78.00px;top:543px;color:#141414;transform:scaleX(0.9173);">АктВыполненныхРаботЛокализация</div>
<svg style="left:57px;top:562px" width="14" height="13" viewBox="0 0 14 13" ><use href="#mod"/></svg>
<svg style="left:303px;top:564px" width="8" height="10" viewBox="0 0 8 10" ><use href="#lock"/></svg>
<svg style="left:323px;top:561px" width="8" height="10" viewBox="0 0 8 10" ><use href="#lock"/></svg>
<svg style="left:330px;top:567px" width="9" height="10" viewBox="0 0 9 10" ><use href="#cube"/></svg>
<div class="t" style="left:78.00px;top:562px;color:#141414;transform:scaleX(0.9308);">АктОРасхожденияхПослеОтгрузкиЛока<span class=el></span></div>
<div class="ab" style="left:383px;top:138px;width:454px;height:378px;background:#C8C8C8;border:1px solid #fff;border-right-color:#8E8E8E;border-bottom-color:#8E8E8E"></div>
<div class="t b" style="left:391.00px;top:144px;color:#2A2A2A;transform:scaleX(0.9926);">Захват объектов в хранилище конфигурации</div>
<svg style="left:818px;top:146px" width="11" height="10" viewBox="0 0 11 10" ><path d="M1,0.5 L10,9.5 M10,0.5 L1,9.5" stroke="#222" stroke-width="1.8"/></svg>
<div class="ab" style="left:387px;top:160px;width:446px;height:352px;background:#FCF9EC"></div>
<div class="ab" style="left:399px;top:172px;width:422px;height:208px;background:#fff;border:1px solid #A89E76"></div>
<div class="ab" style="left:400px;top:173px;width:420px;height:20px;background:linear-gradient(#FBF8EA,#EEE5C2);border-bottom:1px solid #D8CFAE"></div>
<div class="ab" style="left:420px;top:173px;width:1px;height:20px;background:#C4BA92"></div>
<div class="ab" style="left:441px;top:173px;width:1px;height:20px;background:#C4BA92"></div>
<div class="ab" style="left:761px;top:173px;width:1px;height:20px;background:#C4BA92"></div>
<div class="t" style="left:445.70px;top:176px;color:#4A3C18;transform:scaleX(0.9098);">Объект</div>
<div class="t" style="left:766.00px;top:176px;color:#4A3C18;transform:scaleX(0.8868);">Захвати<span class=el style="background:#A89A70"></span></div>
<div class="ab" style="left:400px;top:194px;width:420px;height:18px;border:1px dotted #000"></div>
<svg style="left:404px;top:196px" width="13" height="13" viewBox="0 0 13 13" ><use href="#chk"/></svg>
<svg style="left:766px;top:196px" width="13" height="13" viewBox="0 0 13 13" ><use href="#chk"/></svg>
<svg style="left:447px;top:197px" width="14" height="13" viewBox="0 0 14 13" ><use href="#mod"/></svg>
<div class="t" style="left:465.60px;top:197px;color:#141414;transform:scaleX(0.9070);">ОбщийМодуль.CRMЛокализация</div>
<div class="t" style="left:398.08px;top:386px;color:#2A2A2A;transform:scaleX(0.9213);">Комментарий для последующего помещения:</div>
<div class="ab" style="left:399px;top:403px;width:407px;height:53px;background:#fff;border:1px solid #B4AA82;border-radius:3px 0 3px 3px"></div>
<div class="ab" style="left:805px;top:403px;width:16px;height:19px;background:linear-gradient(#FBF9F0,#EDE8D2);border:1px solid #B4AA82;border-left-color:#E0DAC0;border-radius:0 3px 3px 0"></div>
<svg style="left:809px;top:415px" width="10" height="3" viewBox="0 0 10 3" ><rect x="0" y="0" width="2" height="2" fill="#5A4510"/><rect x="3.5" y="0" width="2" height="2" fill="#5A4510"/><rect x="7" y="0" width="2" height="2" fill="#5A4510"/></svg>
<div class="ab" style="left:400px;top:463px;width:13px;height:13px;background:#fff;border:1px solid #A89E76;border-radius:3px"></div>
<div class="t" style="left:414.08px;top:463px;color:#2A2A2A;transform:scaleX(0.9228);">Выполнять рекурсивно</div>
<div class="ab" style="left:539px;top:463px;width:13px;height:13px;background:#fff;border:1px solid #A89E76;border-radius:3px"></div>
<div class="t" style="left:553.39px;top:463px;color:#2A2A2A;transform:scaleX(0.9085);">Разрешать получать захваченные</div>
<div class="ab" style="left:607px;top:486px;width:70px;height:20px;background:linear-gradient(#FBF9EE,#EFE9D0);border:1px solid #B4AA82;border-radius:3px;box-shadow:inset 0 0 0 1px #F6F2E0,inset 0 0 0 2px #CFC59E;"></div>
<div class="t" style="left:633.75px;top:489px;color:#2A2A2A;transform:scaleX(0.9088);">OK</div>
<div class="ab" style="left:682px;top:486px;width:70px;height:20px;background:linear-gradient(#FBF9EE,#EFE9D0);border:1px solid #B4AA82;border-radius:3px;"></div>
<div class="t" style="left:696.80px;top:489px;color:#2A2A2A;transform:scaleX(0.8930);">Отмена</div>
<div class="ab" style="left:757px;top:486px;width:70px;height:20px;background:linear-gradient(#FBF9EE,#EFE9D0);border:1px solid #B4AA82;border-radius:3px;"></div>
<div class="t" style="left:769.50px;top:489px;color:#2A2A2A;transform:scaleX(0.9043);">Справка</div>
</body></html>
